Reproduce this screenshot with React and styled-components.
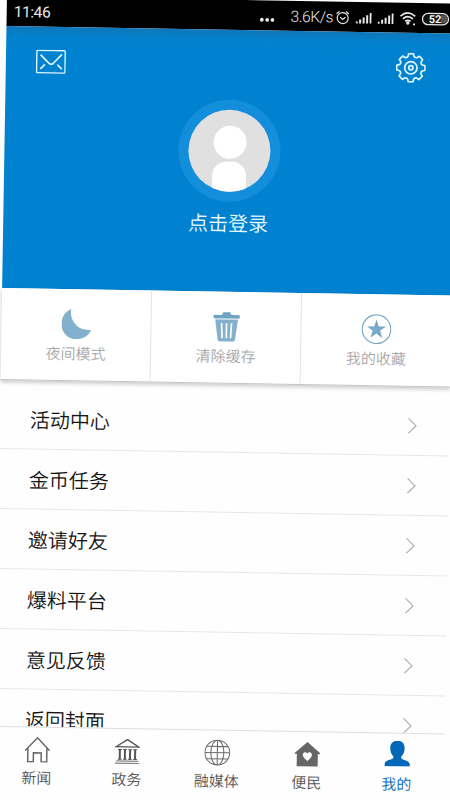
import React from "react";
import styled, { createGlobalStyle, css } from "styled-components";

const GlobalStyle = createGlobalStyle`
  * {
    box-sizing: border-box;
  }
  body {
    margin: 0;
    background: #fefefe;
    font-family: Roboto, "Noto Sans CJK SC", sans-serif;
  }
`;

const Page = styled.div`
  width: 450px;
  height: 800px;
  overflow: hidden;
  background: #fefefe;
`;

// The phone screen leans slightly to the right
const Screen = styled.div`
  display: flex;
  flex-direction: column;
  width: 450px;
  height: 830px;
  margin: -4px 0 0 7px;
  transform: rotate(0.96deg);
  transform-origin: 0 0;
  background: #fefefe;
`;

const Clip = styled.div`
  display: flow-root;
  width: 450px;
  height: 800px;
  overflow: hidden;
`;

const StatusBar = styled.div`
  display: flex;
  align-items: center;
  height: 30px;
  padding: 2px 7px 0 7px;
  background: #000;
  color: #e8e8e8;
  font-size: 16px;
`;

const Clock = styled.span`
  flex: 1;
  font-size: 15.5px;
  letter-spacing: -0.4px;
`;

const Speed = styled.span`
  width: 45px;
  font-size: 15.5px;
  font-weight: 300;
  letter-spacing: -0.4px;
  white-space: nowrap;
`;

const StatusIcon = styled.svg`
  flex: none;
  width: ${(p) => p.$w}px;
  height: 18px;
  margin-right: ${(p) => p.$gap}px;
`;

const Header = styled.header`
  display: flex;
  flex-direction: column;
  align-items: center;
  height: 262px;
  padding-top: 20px;
  background: linear-gradient(#0f77b9 0, #0381ce 10px, #0082d0 20px);
`;

const HeaderTools = styled.div`
  display: flex;
  justify-content: space-between;
  align-items: center;
  width: 100%;
  height: 30px;
  padding: 0 30px 0 30px;
`;

const AvatarRing = styled.div`
  width: 102px;
  height: 102px;
  margin-top: 20px;
  padding: 10px;
  border-radius: 50%;
  background: #128edb;
`;

const Avatar = styled.div`
  display: flex;
  flex-direction: column;
  align-items: center;
  height: 82px;
  padding-top: 16px;
  border-radius: 50%;
  overflow: hidden;
  background: #e0e0e0;
`;

const Head = styled.div`
  flex: none;
  width: 33px;
  height: 33px;
  border-radius: 50%;
  background: #fff;
`;

const Torso = styled.div`
  flex: none;
  width: 34px;
  height: 40px;
  margin-top: 3px;
  border-radius: 14px 14px 0 0;
  background: #fff;
`;

const LoginText = styled.div`
  margin-top: 7px;
  color: #e9fbff;
  font-size: 20px;
  font-weight: 350;
  line-height: 30px;
`;

const Actions = styled.div`
  display: grid;
  grid-template-columns: 149px 150px 151px;
  flex: none;
  height: 92px;
  background: #fff;
  border-bottom: 1px solid #c4c4c4;
  box-shadow: 0 2px 4px rgba(0, 0, 0, 0.22);
`;

const Action = styled.div`
  display: flex;
  flex-direction: column;
  align-items: center;
  padding-top: 20px;
  color: #a8a8a8;
  font-size: 15px;
  font-weight: 350;
  line-height: 22px;
  & + & {
    border-left: 1px solid #e4e4e4;
  }
  svg {
    width: 30px;
    height: 30px;
    margin-bottom: 4px;
  }
`;

const Menu = styled.div`
  flex: none;
  height: 346px;
  padding-top: 9px;
  overflow: hidden;
`;

const MenuRow = styled.div`
  display: flex;
  justify-content: space-between;
  align-items: center;
  height: 60px;
  padding: 0 33px 0 30px;
  border-bottom: 1px solid #e7e7e7;
  color: #141414;
  font-size: 20px;
  font-weight: 350;
  line-height: 28px;
`;

const MenuLabel = styled.span`
  padding-top: 2px;
`;

const TabBar = styled.nav`
  flex: none;
  height: 100px;
  border-top: 1px solid #dedede;
  background: #fefefe;
`;

const Tabs = styled.div`
  display: grid;
  grid-template-columns: repeat(5, 90px);
  margin-left: -2.5px;
`;

const Tab = styled.div`
  display: flex;
  flex-direction: column;
  align-items: center;
  padding-top: 9px;
  color: #555;
  font-size: 15px;
  font-weight: 350;
  line-height: 22px;
  svg {
    width: 26px;
    height: 26px;
    margin-bottom: 5px;
  }
  ${(p) =>
    p.$active &&
    css`
      padding-top: 7px;
      color: #0367ba;
      svg {
        margin-bottom: 7px;
      }
    `}
`;

const Signal = ({ gap }) => (
  <StatusIcon $w={16} $gap={gap} viewBox="0 0 16 18" fill="#e8e8e8">
    <path d="M0 12.5h2v2H0zM3.5 10.5h2v4h-2zM7 8.5h2v6H7zM10.5 6.2h2v8.3h-2zM14 4h2v10.5h-2z" />
  </StatusIcon>
);

// Outline of an eight-toothed gear, teeth joined by round notches
const gearPath = () => {
  const point = (r, deg) => {
    const a = (deg * Math.PI) / 180;
    return `${(15 + r * Math.cos(a)).toFixed(2)} ${(15 + r * Math.sin(a)).toFixed(2)}`;
  };
  let d = "";
  for (let i = 0; i < 8; i++) {
    const c = i * 45;
    d += `${i ? "L" : "M"}${point(12, c - 14)}L${point(14.2, c - 10)}`;
    d += `A14.2 14.2 0 0 1 ${point(14.2, c + 10)}L${point(12, c + 14)}`;
    d += `Q${point(10.4, c + 22.5)} ${point(12, c + 31)}`;
  }
  return d + "Z";
};

const MailIcon = () => (
  <svg width="30" height="24" viewBox="0 0 30 24" fill="none" stroke="#def6ff" strokeWidth="1.4" strokeLinecap="round">
    <rect x=".8" y=".8" width="28.4" height="22.4" rx="1" />
    <path d="M5 5.5l8.2 8.2q2 1.6 4 0L25.5 5M5 18.8l3.6-3.5M25.5 18.8l-3.6-3.5" strokeWidth="1.7" />
  </svg>
);

const GearIcon = () => (
  <svg width="30" height="30" viewBox="0 0 30 30" fill="none" stroke="#def6ff" strokeWidth="1.7" strokeLinejoin="round">
    <path d={gearPath()} />
    <circle cx="15" cy="15" r="6.2" />
    <circle cx="15" cy="15" r="2.1" strokeWidth="1.8" />
  </svg>
);

const MoonIcon = () => (
  <svg viewBox="0 0 30 30" fill="#83b0cc">
    <path d="M9.5 0C7.5 10 15.5 22.5 30 20.3A15.6 15.6 0 0 1 15 30C6.5 30 0 23.5 0 15.2C0 8 4 2 9.5 0Z" />
  </svg>
);

const TrashIcon = () => (
  <svg viewBox="0 0 30 30">
    <path fill="#6fa3c2" d="M2 3.3h8.3L11.5.5h7l1.2 2.8H28v3.5H2z" />
    <path fill="#83b0cc" d="M3.5 6.8h23l-2.8 21q-.3 2.2-2.2 2.2h-13q-1.9 0-2.2-2.2z" />
    <path stroke="#fff" strokeWidth=".8" d="M3 7.4h24" />
    <path stroke="#fff" strokeWidth="1.7" d="M10 11.5l.8 15M15 11.5v15M20 11.5l-.8 15" />
  </svg>
);

const StarIcon = () => (
  <svg viewBox="0 0 30 30" fill="#76a8c7">
    <circle cx="15" cy="15" r="14.3" fill="none" stroke="#76a8c7" strokeWidth="1.2" />
    <path d="M15 5.2l2.3 7h7.2l-5.8 4.3 2.2 7.1-5.9-4.3-5.9 4.3 2.2-7.1-5.8-4.3h7.2z" />
  </svg>
);

const Chevron = () => (
  <svg width="9" height="16" viewBox="0 0 9 16" fill="none" stroke="#adadad" strokeWidth="1.2">
    <path d="M.6.6L8.2 8 .6 15.4" />
  </svg>
);

const HomeIcon = () => (
  <svg viewBox="0 0 26 26" fill="none" stroke="#686868" strokeWidth="1.5">
    <path d="M.8 14L13 1.2 25.2 14M3.5 11.5v13.7h5.6v-9h7.8v9h5.6V11.5" />
  </svg>
);

const GovIcon = () => (
  <svg viewBox="0 0 26 26" fill="none" stroke="#555">
    <path d="M1.5 8.8L13 1.5l11.5 7.3z" strokeWidth="1.3" />
    <path d="M5.5 11.5v10M10.6 11.5v10M15.7 11.5v10M20.8 11.5v10" strokeWidth="2" />
    <path d="M3.6 11.5h3.8M8.7 11.5h3.8M13.8 11.5h3.8M18.9 11.5h3.8M3.6 21.2h3.8M8.7 21.2h3.8M13.8 21.2h3.8M18.9 21.2h3.8" strokeWidth="1" />
    <path d="M2 23h22M.8 25.2h24.4" stroke="#888" strokeWidth="1.2" />
  </svg>
);

const GlobeIcon = () => (
  <svg viewBox="0 0 26 26" fill="none" stroke="#6e6e6e" strokeWidth="1.05">
    <circle cx="13" cy="13" r="12.4" />
    <ellipse cx="13" cy="13" rx="6.5" ry="12.4" />
    <path d="M13 .6v24.8M.6 13h24.8M2.3 6.8h21.4M2.3 19.2h21.4" />
  </svg>
);

const HeartHouseIcon = () => (
  <svg viewBox="0 0 26 26">
    <path fill="#666" d="M13 .8l12.8 11.2v.8h-2.3V25.3h-21V12.8H.2V12z" />
    <path fill="#fff" d="M13 19.8c-2.5-2.2-4.6-3.7-4.6-6 0-3 3.3-3.5 4.6-1.2 1.3-2.3 4.6-1.8 4.6 1.2 0 2.3-2.1 3.8-4.6 6z" />
  </svg>
);

const PersonIcon = () => (
  <svg viewBox="0 0 26 26" fill="#0367ba">
    <path d="M13 0c4.8 0 7.2 3 7.2 7.5 0 4-1.4 6.5-3.2 8.3v1.7c1.5 2.3 8.6 1.5 8.6 6.5v1.7H.4V24c0-5 7.1-4.2 8.6-6.5v-1.7C7.2 14 5.800 11.500 5.800 7.500 5.800 3 8.200 0 13 0z" />
  </svg>
);

const menuItems = ["活动中心", "金币任务", "邀请好友", "爆料平台", "意见反馈", "返回封面"];

const tabs = [
  { label: "新闻", Icon: HomeIcon },
  { label: "政务", Icon: GovIcon },
  { label: "融媒体", Icon: GlobeIcon },
  { label: "便民", Icon: HeartHouseIcon },
  { label: "我的", Icon: PersonIcon, active: true },
];

const Status = () => (
  <StatusBar>
    <Clock>11:46</Clock>
    <StatusIcon $w={15} $gap={16} viewBox="0 0 15 18" fill="#e8e8e8">
      <circle cx="2.2" cy="12.5" r="1.9" />
      <circle cx="7.5" cy="12.5" r="1.9" />
      <circle cx="12.8" cy="12.5" r="1.9" />
    </StatusIcon>
    <Speed>3.6K/s</Speed>
    <StatusIcon $w={14} $gap={6} viewBox="0 0 14 18" fill="none" stroke="#e8e8e8" strokeWidth="1.2">
      <circle cx="7" cy="9.5" r="5.5" />
      <path d="M.8 5.3L3.8 2.8M13.2 5.3l-3-2.5M4.5 8.5L7 10.8l2.8-2.3" />
    </StatusIcon>
    <Signal gap={6} />
    <Signal gap={6} />
    <StatusIcon $w={17} $gap={5} viewBox="0 0 17 18" fill="none" stroke="#e8e8e8" strokeWidth="1.7">
      <path d="M.8 6.5Q8 0 15.5 6.5M3.2 9.2q5-4.4 10 0M5.5 11.7q2.7-2.3 5.4 0" />
      <circle cx="8.2" cy="13.3" r=".8" />
      <path d="M13.5 14.5h2" />
    </StatusIcon>
    <StatusIcon $w={28} $gap={0} viewBox="0 0 28 18">
      <rect x=".8" y="3.4" width="26" height="11.2" rx="5.6" fill="#111" stroke="#e8e8e8" strokeWidth="1.3" />
      <path d="M19 5h3a4 4 0 0 1 0 8h-3z" fill="#555" />
      <text x="13.5" y="12.9" textAnchor="middle" fontSize="11" fontWeight="700" fill="#f2f2f2">
        52
      </text>
    </StatusIcon>
  </StatusBar>
);

const App = () => (
  <Page>
    <GlobalStyle />
    <Clip>
      <Screen>
        <Status />
        <Header>
          <HeaderTools>
            <MailIcon />
            <GearIcon />
          </HeaderTools>
          <AvatarRing>
            <Avatar>
              <Head />
              <Torso />
            </Avatar>
          </AvatarRing>
          <LoginText>点击登录</LoginText>
        </Header>
        <Actions>
          <Action>
            <MoonIcon />
            夜间模式
          </Action>
          <Action>
            <TrashIcon />
            清除缓存
          </Action>
          <Action>
            <StarIcon />
            我的收藏
          </Action>
        </Actions>
        <Menu>
          {menuItems.map((item) => (
            <MenuRow key={item}>
              <MenuLabel>{item}</MenuLabel>
              <Chevron />
            </MenuRow>
          ))}
        </Menu>
        <TabBar>
          <Tabs>
            {tabs.map(({ label, Icon, active }) => (
              <Tab key={label} $active={active}>
                <Icon />
                {label}
              </Tab>
            ))}
          </Tabs>
        </TabBar>
      </Screen>
    </Clip>
  </Page>
);

export default App;
